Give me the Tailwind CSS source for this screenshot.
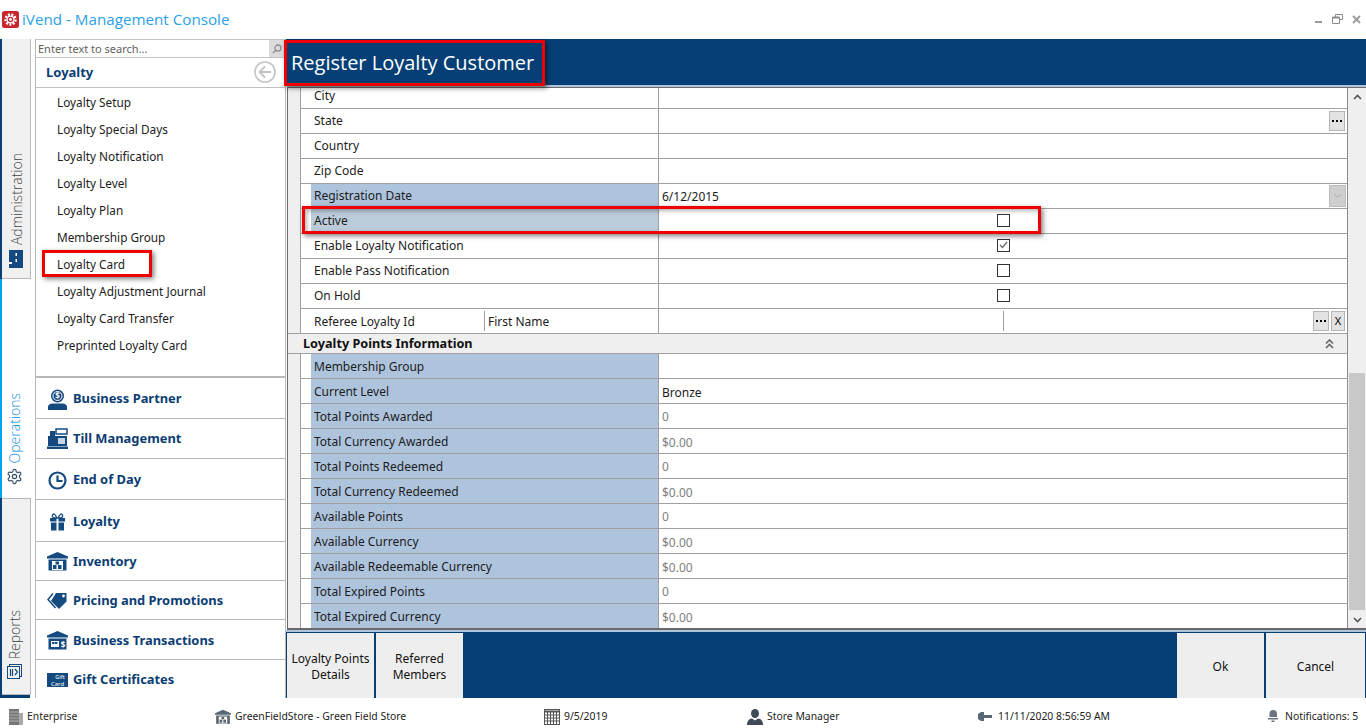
<!DOCTYPE html>
<html lang="en">
<head>
  <meta charset="UTF-8" />
  <title>iVend - Management Console</title>
  <script src="https://cdn.jsdelivr.net/npm/@tailwindcss/browser@4"></script>
</head>
<body class="bg-white overflow-hidden font-['Noto_Sans',sans-serif] text-[12px] text-[#1c1c1c]">
<div class="relative w-[1366px] h-[728px] flex flex-col overflow-hidden">

  <!-- title bar -->
  <div class="h-[39px] flex items-center pl-[2px] pr-[4px]">
    <svg class="w-[17px] h-[17px] -mt-[1px]" viewBox="0 0 17 17">
      <rect width="17" height="17" rx="2.5" fill="#c9252c"/>
      <circle cx="8.5" cy="8.5" r="5" fill="none" stroke="#fff" stroke-width="2.4" stroke-dasharray="2 1.4"/>
      <circle cx="8.5" cy="8.5" r="3.4" fill="none" stroke="#fff" stroke-width="1.2"/>
      <circle cx="8.5" cy="8.5" r="1.4" fill="#fff"/>
    </svg>
    <span class="ml-[3px] font-['Open_Sans',sans-serif] text-[15.2px] text-[#2b9fe6] -mt-[1px]">iVend - Management Console</span>
    <div class="ml-auto flex items-center gap-[9px] pr-[1px] -mt-[1px]">
      <svg class="w-[9px] h-[9px]" viewBox="0 0 9 9"><rect x="1" y="6" width="7" height="2" fill="#9a9a9a"/></svg>
      <svg class="w-[11px] h-[10px]" viewBox="0 0 11 10"><path d="M3.5 3V.5h7v5H8M.5 3h7v6.5h-7z" fill="none" stroke="#8a8a8a"/><path d="M0 3h8v1.5H0z" fill="#8a8a8a"/></svg>
      <svg class="w-[9px] h-[9px]" viewBox="0 0 9 9"><path d="M1 1l7 7M8 1L1 8" stroke="#9a9a9a" stroke-width="1.8"/></svg>
    </div>
  </div>

  <!-- body -->
  <div class="h-[659px] flex">

    <!-- vertical module tabs -->
    <div class="w-[36px] flex flex-col bg-white border-r border-[#b8b8b8]">
      <div class="h-[240px] border-l-[2px] border-[#063f75] flex">
        <div class="w-[29px] bg-[#f0f0f0] border-r border-b border-[#b8b8b8] flex flex-col items-center justify-end pb-[10px]">
          <span class="[writing-mode:vertical-rl] rotate-180 font-['Open_Sans',sans-serif] font-light text-[14px] text-[#444]">Administration</span>
          <svg class="w-[14px] h-[18px] mt-[5px]" viewBox="0 0 14 18"><rect width="14" height="18" fill="#154a80"/><rect x="6.5" y="3" width="1.5" height="3" fill="#fff"/><rect x="6.5" y="9" width="1.5" height="3" fill="#fff"/><rect x="0" y="12" width="3" height="2" fill="#fff"/></svg>
        </div>
      </div>
      <div class="h-[219px] border-l-[2px] border-[#00a2f2] flex flex-col items-center justify-end pb-[13px] pr-[8px]">
        <span class="[writing-mode:vertical-rl] rotate-180 font-['Open_Sans',sans-serif] font-light text-[14px] text-[#0c8fe6]">Operations</span>
        <svg class="w-[17px] h-[17px] mt-[5px]" viewBox="0 0 24 24" fill="none" stroke="#2f4a66" stroke-width="1.6"><circle cx="12" cy="12" r="3"/><path d="M12.22 2h-.44a2 2 0 0 0-2 2v.18a2 2 0 0 1-1 1.73l-.43.25a2 2 0 0 1-2 0l-.15-.08a2 2 0 0 0-2.730.730l-.220.380a2 2 0 0 0 .730 2.730l.150.100a2 2 0 0 1 1 1.720v.510a2 2 0 0 1-1 1.740l-.150.090a2 2 0 0 0-.730 2.730l.220.380a2 2 0 0 0 2.730.730l.150-.080a2 2 0 0 1 2 0l.430.250a2 2 0 0 1 1 1.730V20a2 2 0 0 0 2 2h.440a2 2 0 0 0 2-2v-.180a2 2 0 0 1 1-1.730l.430-.250a2 2 0 0 1 2 0l.150.080a2 2 0 0 0 2.730-.730l.220-.390a2 2 0 0 0-.730-2.730l-.150-.080a2 2 0 0 1-1-1.740v-.500a2 2 0 0 1 1-1.740l.150-.090a2 2 0 0 0 .730-2.730l-.220-.380a2 2 0 0 0-2.730-.730l-.150.080a2 2 0 0 1-2 0l-.430-.250a2 2 0 0 1-1-1.730V4a2 2 0 0 0-2-2z"/></svg>
      </div>
      <div class="h-[197px] border-l-[2px] border-[#063f75] flex">
        <div class="w-[29px] bg-[#f0f0f0] border-r border-b border-[#b8b8b8] border-t flex flex-col items-center justify-end pb-[15px] pr-[3px]">
          <span class="[writing-mode:vertical-rl] rotate-180 font-['Open_Sans',sans-serif] font-light text-[14px] text-[#444]">Reports</span>
          <svg class="w-[15px] h-[15px] mt-[5px]" viewBox="0 0 15 15" fill="none" stroke="#154a80"><rect x="2.500" y=".5" width="12" height="12"/><rect x=".5" y="2.500" width="12" height="12" fill="#f0f0f0"/><path d="M3.500 5v7M5.500 5v7M8 5l2.500 3L8 11" stroke-width="1.200"/></svg>
        </div>
      </div>
      <div class="h-[3px] w-[30px] bg-[#063f75]"></div>
    </div>

    <!-- sidebar -->
    <div class="w-[250px] border-r border-[#b8b8b8] flex flex-col bg-white">
      <div class="h-[19px] flex border-t border-b border-[#c4c4c4]">
        <span class="flex-1 pl-[2px] text-[11px] leading-[18px] text-[#5f5f5f]">Enter text to search...</span>
        <div class="w-[16px] bg-[#dcdcdc] flex items-center justify-center">
          <svg class="w-[10px] h-[10px]" viewBox="0 0 10 10" fill="none" stroke="#8c8c8c" stroke-width="1.300"><circle cx="6" cy="4" r="3"/><path d="M4 6L1 9"/></svg>
        </div>
      </div>
      <div class="h-[30px] flex items-center justify-between pl-[10px] pr-[9px] border-b border-[#c0c0c0]">
        <span class="font-bold text-[13px] text-[#0b3d73]">Loyalty</span>
        <svg class="w-[22px] h-[22px] -mt-[2px]" viewBox="0 0 22 22" fill="none" stroke="#c4c4c4" stroke-width="1.600"><circle cx="11" cy="11" r="10"/><path d="M17 11H6M11 5.500L5.500 11l5.500 5.500" stroke-width="2"/></svg>
      </div>
      <div class="h-[288px] pl-[21px] pt-[1.500px] flex flex-col text-[11.8px]">
        <a class="h-[27px] flex items-center">Loyalty Setup</a>
        <a class="h-[27px] flex items-center">Loyalty Special Days</a>
        <a class="h-[27px] flex items-center">Loyalty Notification</a>
        <a class="h-[27px] flex items-center">Loyalty Level</a>
        <a class="h-[27px] flex items-center">Loyalty Plan</a>
        <a class="h-[27px] flex items-center">Membership Group</a>
        <a class="h-[27px] flex items-center">Loyalty Card</a>
        <a class="h-[27px] flex items-center">Loyalty Adjustment Journal</a>
        <a class="h-[27px] flex items-center">Loyalty Card Transfer</a>
        <a class="h-[27px] flex items-center">Preprinted Loyalty Card</a>
      </div>
      <div class="flex flex-col font-bold text-[12.9px] text-[#0b3d73] border-t-[2px] border-[#b8b8b8]">
        <div class="h-[41px] flex items-center pl-[11px] gap-[5px] border-b border-[#b8b8b8] pt-[2px]">
          <svg class="w-[21px] h-[21px]" viewBox="0 0 21 21" fill="#154a80"><circle cx="10.500" cy="7" r="6.500"/><circle cx="10.500" cy="7" r="4.500" fill="none" stroke="#fff"/><path d="M1 21v-3q0-3 4-3.500h11q4 .5 4 3.500v3z"/><text x="10.500" y="10" font-size="8" font-weight="700" text-anchor="middle" fill="#fff">$</text></svg>
          <span>Business Partner</span>
        </div>
        <div class="h-[40px] flex items-center pl-[11px] gap-[5px] border-b border-[#b8b8b8]">
          <svg class="w-[21px] h-[21px]" viewBox="0 0 21 21" fill="#154a80"><rect x="1" y="8" width="19" height="10"/><rect x="3" y="3" width="5" height="6"/><rect x="9" y="1" width="11" height="5" fill="none" stroke="#154a80" stroke-width="1.500"/><rect x="11" y="10" width="7" height="6" fill="#c6d4e4"/><rect x="0" y="18.500" width="21" height="2.500"/></svg>
          <span>Till Management</span>
        </div>
        <div class="h-[41px] flex items-center pl-[11px] gap-[5px] border-b border-[#b8b8b8] pt-[2px]">
          <svg class="w-[21px] h-[21px]" viewBox="0 0 21 21" fill="none" stroke="#154a80" stroke-width="2.200"><circle cx="10.500" cy="10.500" r="8"/><path d="M10.500 5.500v5.500h5"/></svg>
          <span>End of Day</span>
        </div>
        <div class="h-[42px] flex items-center pl-[11px] gap-[5px] border-b border-[#b8b8b8] pt-[3px]">
          <svg class="w-[21px] h-[21px]" viewBox="0 0 21 21" fill="#154a80"><rect x="3" y="6" width="15" height="3.500"/><rect x="4" y="10.500" width="13" height="8"/><rect x="9.500" y="6" width="2" height="13" fill="#fff"/><path d="M10 6Q4 6 5.500 3t4.500 3zM11 6q6 0 4.500-3T11 6z" fill="none" stroke="#154a80" stroke-width="1.300"/></svg>
          <span>Loyalty</span>
        </div>
        <div class="h-[39px] flex items-center pl-[11px] gap-[5px] border-b border-[#b8b8b8] pt-[1px]">
          <svg class="w-[21px] h-[21px]" viewBox="0 0 21 21" fill="#154a80"><path d="M10.500 1L21 5.500v2H0v-2z"/><rect x="1.500" y="8.500" width="18" height="11"/><rect x="5" y="10" width="11" height="9" fill="#fff"/><rect x="6" y="14" width="3.500" height="4"/><rect x="11" y="14" width="3.500" height="4"/><rect x="8.500" y="10.500" width="3.500" height="3"/></svg>
          <span>Inventory</span>
        </div>
        <div class="h-[39px] flex items-center pl-[11px] gap-[5px] border-b border-[#b8b8b8] pt-[1px]">
          <svg class="w-[21px] h-[21px]" viewBox="0 0 21 21"><path d="M9 3h10.500v8.500L12 19 4 11z" fill="#154a80"/><circle cx="16.500" cy="6" r="1.400" fill="#fff"/><path d="M6 3.500L1 9.500 8.500 18" fill="none" stroke="#154a80" stroke-width="1.500"/></svg>
          <span>Pricing and Promotions</span>
        </div>
        <div class="h-[40px] flex items-center pl-[11px] gap-[5px] border-b border-[#b8b8b8] pt-[2px]">
          <svg class="w-[21px] h-[21px]" viewBox="0 0 21 21" fill="#154a80"><path d="M10.500 1L21 5.500v2H0v-2z"/><rect x="1.500" y="8.500" width="18" height="11"/><rect x="4" y="11" width="8" height="6" fill="#fff"/><rect x="5" y="12" width="2.500" height="2"/><rect x="8" y="12" width="2.500" height="2"/><text x="16" y="18" font-size="8" font-weight="700" text-anchor="middle" fill="#fff">$</text></svg>
          <span>Business Transactions</span>
        </div>
        <div class="h-[38px] flex items-center pl-[11px] gap-[5px] pt-[1px]">
          <svg class="w-[21px] h-[14px]" viewBox="0 0 21 14"><rect width="21" height="14" fill="#154a80"/><text x="13" y="6" font-size="5.500" text-anchor="middle" fill="#fff" font-weight="400">Gift</text><text x="10.500" y="12.500" font-size="6" text-anchor="middle" fill="#fff" font-weight="400">Card</text></svg>
          <span>Gift Certificates</span>
        </div>
      </div>
    </div>

    <!-- main -->
    <div class="w-[1080px] flex flex-col">
      <div class="h-[48px] bg-[#063f75] flex items-center pl-[5px] pt-[1px] border-b-[2px] border-[#aec3dc]">
        <span class="font-['Open_Sans',sans-serif] text-[20px] text-white">Register Loyalty Customer</span>
      </div>

      <!-- property grid -->
      <div class="h-[543px] flex border-t border-l border-b-[2px] border-[#6a6a6a] ml-[1px] overflow-hidden">
        <div class="w-[1060px] border-r border-[#8c8c8c] bg-[#efefef] flex flex-col">
          <div class="ml-[12px] flex flex-col bg-white border-l border-[#a0a0a0]">
            <div class="h-[21px] flex border-b border-[#a0a0a0]"><div class="w-[348px] ml-[10px] pl-[3px] border-r border-[#a0a0a0] leading-[15px]">City</div></div>
            <div class="h-[25px] flex border-b border-[#a0a0a0]"><div class="w-[348px] ml-[10px] pl-[3px] border-r border-[#a0a0a0] leading-[23px]">State</div><div class="flex-1 flex justify-end items-center pr-[2px]"><span class="w-[16px] h-[20px] bg-[#e3e3e3] border border-[#b4b4b4] flex items-center justify-center"><svg class="w-[10px] h-[2px]" viewBox="0 0 10 2" fill="#000"><rect width="2" height="2"/><rect x="4" width="2" height="2"/><rect x="8" width="2" height="2"/></svg></span></div></div>
            <div class="h-[25px] flex border-b border-[#a0a0a0]"><div class="w-[348px] ml-[10px] pl-[3px] border-r border-[#a0a0a0] leading-[23px]">Country</div></div>
            <div class="h-[25px] flex border-b border-[#a0a0a0]"><div class="w-[348px] ml-[10px] pl-[3px] border-r border-[#a0a0a0] leading-[23px]">Zip Code</div></div>
            <div class="h-[25px] flex border-b border-[#a0a0a0]"><div class="w-[348px] ml-[10px] pl-[3px] border-r border-[#a0a0a0] leading-[23px] bg-[#aec3dc]">Registration Date</div><div class="flex-1 flex items-center justify-between pl-[3px] pr-[1px]"><span class="leading-[25px] mt-[1px]">6/12/2015</span><span class="w-[17px] h-[22px] bg-[#cfcfcf] border border-[#bdbdbd] flex items-center justify-center"><svg class="w-[9px] h-[6px]" viewBox="0 0 9 6" fill="none" stroke="#a8a8a8"><path d="M1 1l3.500 3.500L8 1"/></svg></span></div></div>
            <div class="h-[25px] flex border-b border-[#a0a0a0]"><div class="w-[348px] ml-[10px] pl-[3px] border-r border-[#a0a0a0] leading-[23px] bg-[#bccbda]">Active</div><div class="flex-1 flex justify-center items-center pb-[2px]"><span class="w-[13px] h-[13px] border border-[#333] bg-white"></span></div></div>
            <div class="h-[25px] flex border-b border-[#a0a0a0]"><div class="w-[348px] ml-[10px] pl-[3px] border-r border-[#a0a0a0] leading-[23px]">Enable Loyalty Notification</div><div class="flex-1 flex justify-center items-center pb-[2px]"><span class="w-[13px] h-[13px] border border-[#333] bg-white flex items-center justify-center"><svg class="w-[9px] h-[8px]" viewBox="0 0 9 8" fill="none" stroke="#666" stroke-width="1.300"><path d="M1 4l2.500 2.500L8 1"/></svg></span></div></div>
            <div class="h-[25px] flex border-b border-[#a0a0a0]"><div class="w-[348px] ml-[10px] pl-[3px] border-r border-[#a0a0a0] leading-[23px]">Enable Pass Notification</div><div class="flex-1 flex justify-center items-center pb-[2px]"><span class="w-[13px] h-[13px] border border-[#333] bg-white"></span></div></div>
            <div class="h-[25px] flex border-b border-[#a0a0a0]"><div class="w-[348px] ml-[10px] pl-[3px] border-r border-[#a0a0a0] leading-[23px]">On Hold</div><div class="flex-1 flex justify-center items-center pb-[2px]"><span class="w-[13px] h-[13px] border border-[#333] bg-white"></span></div></div>
            <div class="h-[24px] flex">
              <div class="w-[348px] ml-[10px] pl-[3px] border-r border-[#a0a0a0] leading-[23px] flex">
                <span class="w-[171px] h-[20px] mt-[2px] border-r border-[#a0a0a0] leading-[21px]">Referee Loyalty Id</span><span class="pl-[3px] leading-[25px]">First Name</span>
              </div>
              <div class="flex-1 flex items-center justify-end pr-[2px]">
                <span class="flex-1 h-[20px] border-r border-[#a0a0a0]"></span>
                <span class="ml-[309px] w-[16px] h-[20px] bg-[#e3e3e3] border border-[#b4b4b4] flex items-center justify-center"><svg class="w-[10px] h-[2px]" viewBox="0 0 10 2" fill="#000"><rect width="2" height="2"/><rect x="4" width="2" height="2"/><rect x="8" width="2" height="2"/></svg></span>
                <span class="ml-[2px] w-[14px] h-[20px] bg-[#e3e3e3] border border-[#b4b4b4] text-[11px] leading-[17px] text-center text-black">X</span>
              </div>
            </div>
          </div>
          <!-- section header -->
          <div class="h-[21px] flex items-center justify-between pl-[15px] pr-[13px] border-y border-[#a0a0a0] font-bold text-[12.7px] text-[#111]">
            <span>Loyalty Points Information</span>
            <svg class="w-[9px] h-[10px]" viewBox="0 0 9 10" fill="none" stroke="#6a6a6a" stroke-width="1.700"><path d="M1 4.500L4.500 1 8 4.500M1 9l3.500-3.500L8 9"/></svg>
          </div>
          <div class="ml-[12px] flex flex-col bg-white border-l border-[#a0a0a0]">
            <div class="h-[25px] flex border-b border-[#a0a0a0]"><div class="w-[348px] ml-[10px] pl-[3px] border-r border-[#a0a0a0] leading-[25px] bg-[#aec3dc]">Membership Group</div></div>
            <div class="h-[25px] flex border-b border-[#a0a0a0]"><div class="w-[348px] ml-[10px] pl-[3px] border-r border-[#a0a0a0] leading-[25px] bg-[#aec3dc]">Current Level</div><span class="pl-[3px] leading-[25px] mt-[1px]">Bronze</span></div>
            <div class="h-[25px] flex border-b border-[#a0a0a0]"><div class="w-[348px] ml-[10px] pl-[3px] border-r border-[#a0a0a0] leading-[25px] bg-[#aec3dc]">Total Points Awarded</div><span class="pl-[3px] leading-[25px] text-[#808080]">0</span></div>
            <div class="h-[25px] flex border-b border-[#a0a0a0]"><div class="w-[348px] ml-[10px] pl-[3px] border-r border-[#a0a0a0] leading-[25px] bg-[#aec3dc]">Total Currency Awarded</div><span class="pl-[3px] leading-[27px] text-[#808080]">$0.00</span></div>
            <div class="h-[25px] flex border-b border-[#a0a0a0]"><div class="w-[348px] ml-[10px] pl-[3px] border-r border-[#a0a0a0] leading-[25px] bg-[#aec3dc]">Total Points Redeemed</div><span class="pl-[3px] leading-[25px] text-[#808080]">0</span></div>
            <div class="h-[25px] flex border-b border-[#a0a0a0]"><div class="w-[348px] ml-[10px] pl-[3px] border-r border-[#a0a0a0] leading-[25px] bg-[#aec3dc]">Total Currency Redeemed</div><span class="pl-[3px] leading-[27px] text-[#808080]">$0.00</span></div>
            <div class="h-[25px] flex border-b border-[#a0a0a0]"><div class="w-[348px] ml-[10px] pl-[3px] border-r border-[#a0a0a0] leading-[25px] bg-[#aec3dc]">Available Points</div><span class="pl-[3px] leading-[25px] text-[#808080]">0</span></div>
            <div class="h-[25px] flex border-b border-[#a0a0a0]"><div class="w-[348px] ml-[10px] pl-[3px] border-r border-[#a0a0a0] leading-[25px] bg-[#aec3dc]">Available Currency</div><span class="pl-[3px] leading-[27px] text-[#808080]">$0.00</span></div>
            <div class="h-[25px] flex border-b border-[#a0a0a0]"><div class="w-[348px] ml-[10px] pl-[3px] border-r border-[#a0a0a0] leading-[25px] bg-[#aec3dc]">Available Redeemable Currency</div><span class="pl-[3px] leading-[27px] text-[#808080]">$0.00</span></div>
            <div class="h-[25px] flex border-b border-[#a0a0a0]"><div class="w-[348px] ml-[10px] pl-[3px] border-r border-[#a0a0a0] leading-[25px] bg-[#aec3dc]">Total Expired Points</div><span class="pl-[3px] leading-[25px] text-[#808080]">0</span></div>
            <div class="h-[25px] flex"><div class="w-[348px] ml-[10px] pl-[3px] border-r border-[#a0a0a0] leading-[25px] bg-[#aec3dc]">Total Expired Currency</div><span class="pl-[3px] leading-[27px] text-[#808080]">$0.00</span></div>
          </div>
        </div>
        <!-- scrollbar -->
        <div class="w-[18px] bg-[#efefef] flex flex-col items-center">
          <svg class="w-[9px] h-[6px] mt-[6px]" viewBox="0 0 9 6" fill="none" stroke="#555" stroke-width="1.600"><path d="M1 5l3.500-3.500L8 5"/></svg>
          <div class="w-[16px] h-[237px] mt-[273px] bg-[#c8c8c8]"></div>
          <svg class="w-[9px] h-[6px] mt-[7px]" viewBox="0 0 9 6" fill="none" stroke="#555" stroke-width="1.600"><path d="M1 1l3.500 3.500L8 1"/></svg>
        </div>
      </div>

      <!-- action bar -->
      <div class="h-[68px] bg-[#063f75] border-t-[2px] border-[#aec3dc] flex pt-[1px] pl-[1px] text-center leading-[16px] text-[#111]">
        <div class="w-[87px] pt-[3px] bg-[#eeeeee] flex items-center justify-center">Loyalty Points<br>Details</div>
        <div class="w-[87px] pt-[3px] ml-[2px] bg-[#eeeeee] flex items-center justify-center">Referred<br>Members</div>
        <div class="w-[87px] pt-[3px] ml-auto bg-[#eeeeee] flex items-center justify-center">Ok</div>
        <div class="w-[99px] pt-[3px] ml-[2px] mr-[1px] bg-[#eeeeee] flex items-center justify-center">Cancel</div>
      </div>
    </div>
  </div>

  <!-- status bar -->
  <div class="h-[30px] flex items-center text-[10.4px] text-[#222] pl-[8px] pt-[7px]">
    <div class="w-[207px] flex items-center gap-[3px]">
      <svg class="w-[16px] h-[16px]" viewBox="0 0 16 16"><rect x="1" y="0" width="10" height="16" fill="#777"/><rect x="11" y="4" width="4" height="12" fill="#aaa"/><path d="M1 3h10M1 6h10M1 9h10M1 12h10" stroke="#bbb" stroke-width=".8"/></svg>
      <span>Enterprise</span>
    </div>
    <div class="w-[329px] flex items-center gap-[4px]">
      <svg class="w-[16px] h-[16px]" viewBox="0 0 21 21" fill="#5a6672"><path d="M10.500 1L21 5.500v2H0v-2z"/><rect x="1.500" y="8.500" width="18" height="11"/><rect x="5" y="10" width="11" height="9" fill="#fff"/><rect x="6" y="14" width="3.500" height="4"/><rect x="11" y="14" width="3.500" height="4"/><rect x="8.500" y="10.500" width="3.500" height="3"/></svg>
      <span>GreenFieldStore - Green Field Store</span>
    </div>
    <div class="w-[203px] flex items-center gap-[4px]">
      <svg class="w-[16px] h-[16px]" viewBox="0 0 16 16" fill="none" stroke="#555"><rect x=".5" y=".5" width="15" height="15"/><path d="M0 2.500h16" stroke-width="2"/><path d="M.5 6h15M.5 9h15M.5 12h15M3.500 3v13M6.500 3v13M9.500 3v13M12.500 3v13"/></svg>
      <span>9/5/2019</span>
    </div>
    <div class="w-[231px] flex items-center gap-[4px]">
      <svg class="w-[16px] h-[16px]" viewBox="0 0 16 16" fill="#3f4a57"><ellipse cx="8" cy="4.500" rx="4" ry="4.500"/><path d="M0 16q0-6 5-6.500l3 2 3-2q5 .5 5 6.500z"/></svg>
      <span>Store Manager</span>
    </div>
    <div class="w-[289px] flex items-center gap-[6px]">
      <svg class="w-[14px] h-[9px]" viewBox="0 0 14 9" fill="#5a6672"><path d="M0 2l3-2h3v9H3L0 7z"/><rect x="6" y="3" width="8" height="3"/></svg>
      <span>11/11/2020 8:56:59 AM</span>
    </div>
    <div class="flex items-center gap-[6px]">
      <svg class="w-[12px] h-[12px]" viewBox="0 0 12 12" fill="#6a7480"><path d="M6 0q-3.500 0-3.500 4v3H10V4Q10 0 6 0zM1 8h10v1.500H1zM4.500 10.500h3V12h-3z"/></svg>
      <span>Notifications: 5</span>
    </div>
  </div>

  <!-- red annotation boxes drawn over the screenshot -->
  <div class="absolute left-[284px] top-[40px] w-[261px] h-[46px] border-[3px] border-[#ee0000] shadow-[2px_2px_5px_rgba(0,0,0,0.5)]"></div>
  <div class="absolute left-[42px] top-[250px] w-[110px] h-[27px] border-[3px] border-[#ee0000] shadow-[2px_2px_5px_rgba(0,0,0,0.5)]"></div>
  <div class="absolute left-[302px] top-[206px] w-[739px] h-[28px] border-[3px] border-[#ee0000] shadow-[2px_2px_5px_rgba(0,0,0,0.5),inset_2px_2px_4px_rgba(0,0,0,0.3)]"></div>
</div>
</body>
</html>
